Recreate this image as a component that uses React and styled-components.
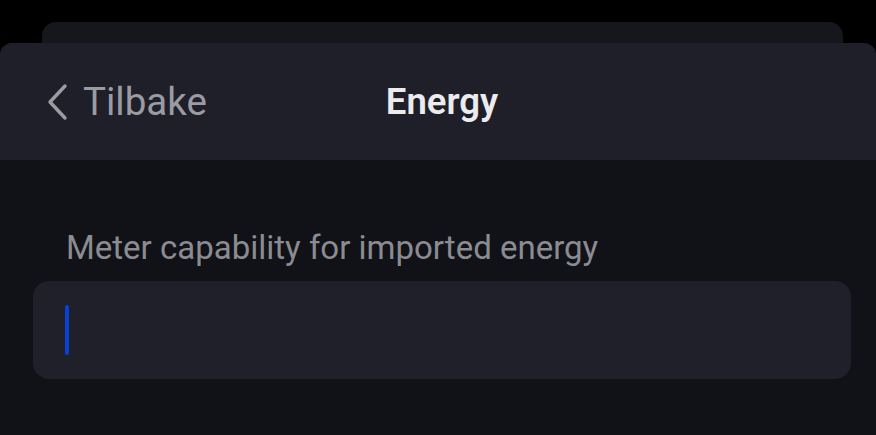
import React from 'react'
import styled, { createGlobalStyle } from 'styled-components'

const GlobalStyle = createGlobalStyle`
  html, body {
    margin: 0;
    padding: 0;
    background: #000;
    height: 100%;
  }
  #root {
    height: 100%;
  }
`

const Screen = styled.div`
  height: 100%;
  display: flex;
  flex-direction: column;
  padding-top: 22px;
  box-sizing: border-box;
  font-family: Roboto, "Noto Sans", sans-serif;
  overflow: hidden;
`

const BehindCard = styled.div`
  height: 21px;
  margin: 0 33px 0 42px;
  background: #16171c;
  border-radius: 14px 14px 0 0;
`

const Sheet = styled.div`
  flex: 1;
  display: flex;
  flex-direction: column;
  border-radius: 12px 12px 0 0;
  overflow: hidden;
  background: #111217;
`

const NavBar = styled.header`
  height: 117px;
  flex-shrink: 0;
  background: #1f1f29;
  display: grid;
  grid-template-columns: 1fr auto 1fr;
  align-items: center;
  padding: 0 44px;
`

const BackButton = styled.button`
  display: flex;
  align-items: center;
  gap: 15px;
  background: none;
  border: none;
  padding: 0 0 0 2px;
  color: #9b9ba4;
  font-family: inherit;
  font-size: 38.5px;
  justify-self: start;
  cursor: pointer;
`

const Title = styled.h1`
  margin: 0 0 0 8px;
  font-size: 36.5px;
  font-weight: 600;
  color: #ececee;
`

const Body = styled.main`
  padding: 68px 25px 0 33px;
  display: flex;
  flex-direction: column;
`

const Label = styled.label`
  font-size: 33px;
  color: #8b8b92;
  padding-left: 33px;
  margin-bottom: 14px;
`

const Field = styled.div`
  height: 98px;
  border-radius: 16px;
  background: #20202a;
  display: flex;
  align-items: center;
  padding-left: 32px;
`

const Caret = styled.span`
  width: 4px;
  height: 50px;
  border-radius: 2px;
  background: #0b3fd6;
`

const App = () => {
  return (
    <>
      <GlobalStyle />
      <Screen>
        <BehindCard />
        <Sheet>
          <NavBar>
            <BackButton>
              <svg width="22" height="38" viewBox="0 0 22 38" fill="none">
                <path d="M19 3 L4 19 L19 35" stroke="#9b9ba4" strokeWidth="3.4" strokeLinecap="round" strokeLinejoin="round" />
              </svg>
              Tilbake
            </BackButton>
            <Title>Energy</Title>
            <div />
          </NavBar>
          <Body>
            <Label>Meter capability for imported energy</Label>
            <Field>
              <Caret />
            </Field>
          </Body>
        </Sheet>
      </Screen>
    </>
  )
}

export default App
